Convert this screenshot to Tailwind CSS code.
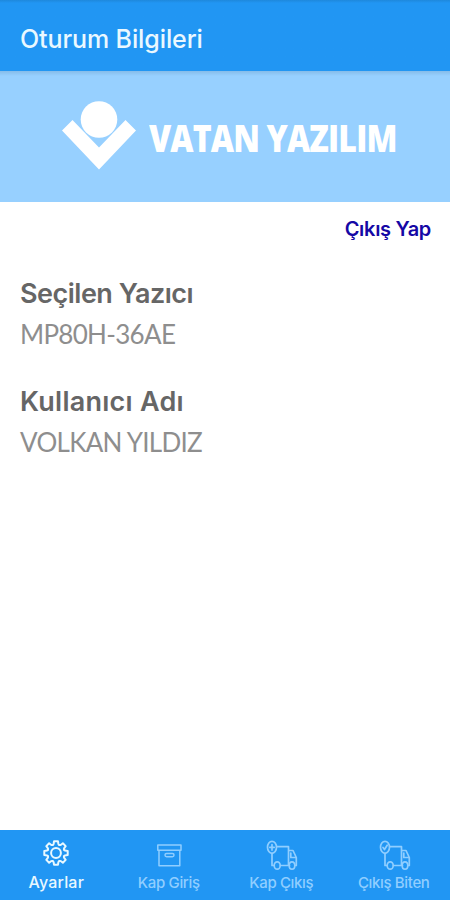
<!DOCTYPE html>
<html lang="tr">
<head>
<meta charset="utf-8">
<title>Oturum Bilgileri</title>
<script src="https://cdn.jsdelivr.net/npm/@tailwindcss/browser@4"></script>
</head>
<body class="w-[450px] h-[900px] overflow-hidden bg-white font-['Lato',sans-serif]">
<div class="flex flex-col w-[450px] h-[900px] whitespace-nowrap">
  <header class="h-[71px] shrink-0 bg-[#2196f3] bg-linear-to-b from-[#1e88dc] from-0% to-[#2196f3] to-[3px] pl-5 pt-[22px] text-[#eaf8ff]">
    <h1 class="font-['Inter',sans-serif] font-medium text-[25px] leading-[34px] tracking-[-0.1px]"><span>Oturum Bilgileri</span></h1>
  </header>
  <div class="h-[131px] shrink-0 bg-[#97d0ff] bg-linear-to-b from-[#86bce9] to-[#97d0ff] to-[5px] flex pl-[62px] pt-[30px]">
    <svg class="w-[74px] h-[70px] shrink-0" viewBox="0 0 74 70" fill="#fff"><circle cx="37" cy="18.500" r="18.300"/><path d="M0 29.500 10.500 19 37 46.500 63.500 19 74 29.500 37 68.500Z"/></svg>
    <div class="ml-[13px] mt-[17px] font-['Open_Sans',sans-serif] font-extrabold text-[37px] leading-[40px] tracking-[-1px] text-white origin-left scale-x-[0.866]"><span>VATAN YAZILIM</span></div>
  </div>
  <main class="flex-1 px-5">
    <div class="flex justify-end pt-[13px] -mr-[1px]"><a class="font-['Inter',sans-serif] font-semibold text-[20px] leading-[28px] tracking-[-0.3px] text-[#1508a5]">Çıkış Yap</a></div>
    <section class="mt-[33px]">
      <h2 class="font-['Inter',sans-serif] font-semibold text-[27px] leading-[36px] tracking-[-0.5px] text-[#666]"><span>Seçilen Yazıcı</span></h2>
      <p class="mt-[4px] text-[26px] leading-[36px] tracking-[-0.7px] text-[#8e8e8e]"><span>MP80H-36AE</span></p>
    </section>
    <section class="mt-[32px]">
      <h2 class="font-['Inter',sans-serif] font-semibold text-[27px] leading-[36px] tracking-[0.25px] text-[#666]"><span>Kullanıcı Adı</span></h2>
      <p class="mt-[4px] text-[26px] leading-[36px] tracking-[-0.7px] text-[#8e8e8e]"><span>VOLKAN YILDIZ</span></p>
    </section>
  </main>
  <nav class="h-[70px] shrink-0 bg-[#2196f3] grid grid-cols-4 text-[#90ceff] font-['Inter',sans-serif] font-medium text-[15px] tracking-[-0.35px] leading-[22px]">
    <div class="flex flex-col items-center pt-[8px] text-[#e8f8ff]">
      <svg class="w-[30px] h-[30px]" viewBox="-15 -15 30 30" fill="none" stroke="currentColor" stroke-width="2" stroke-linejoin="round" stroke-linecap="round">
        <defs><path id="tooth" d="M-3.330-8.040Q-2.600-8.400-2.400-9L-2-11.700H2L2.400-9Q2.600-8.400 3.330-8.040"/></defs>
        <use href="#tooth"/><use href="#tooth" transform="rotate(45)"/><use href="#tooth" transform="rotate(90)"/><use href="#tooth" transform="rotate(135)"/><use href="#tooth" transform="rotate(180)"/><use href="#tooth" transform="rotate(225)"/><use href="#tooth" transform="rotate(270)"/><use href="#tooth" transform="rotate(315)"/>
        <circle r="4.900"/>
      </svg>
      <span class="mt-[3px] text-[16px] tracking-[0.2px]">Ayarlar</span>
    </div>
    <div class="flex flex-col items-center pt-[8px]">
      <svg class="w-[30px] h-[30px]" viewBox="0 0 30 30" fill="none" stroke="currentColor" stroke-width="1.500" stroke-linejoin="round"><path d="M3.800 7H27V12.200H3.800ZM5 12.200V27.800H25.800V12.200"/><rect x="11" y="15.500" width="9" height="3.200" rx="1.600"/></svg>
      <span class="mt-[4px]">Kap Giriş</span>
    </div>
    <div class="flex flex-col items-center pt-[8px]">
      <svg class="w-[34px] h-[34px]" viewBox="-1 0 34 34" fill="none" stroke="currentColor" stroke-width="1.700" stroke-linejoin="round" stroke-linecap="round"><ellipse cx="7" cy="9.300" rx="4.500" ry="6"/><path d="M7 6.500V12.100M4.800 9.300H9.200M11.700 8.700H23.500V27M7 15.300V27.500H9M15.500 27.500H24.500M23.500 12.500H28L31.300 19.500V27.500H30M25.800 15V19.500H31"/><ellipse cx="12.200" cy="27.500" rx="3" ry="3.700"/><ellipse cx="27" cy="27.500" rx="2.800" ry="3.700"/></svg>
      <span>Kap Çıkış</span>
    </div>
    <div class="flex flex-col items-center pt-[8px]">
      <svg class="w-[34px] h-[34px]" viewBox="-1 0 34 34" fill="none" stroke="currentColor" stroke-width="1.700" stroke-linejoin="round" stroke-linecap="round"><ellipse cx="7" cy="9.300" rx="4.500" ry="6"/><path d="M5 9.500 6.500 11.500 9.200 7.200M11.700 8.700H23.500V27M7 15.300V27.500H9M15.500 27.500H24.500M23.500 12.500H28L31.300 19.500V27.500H30M25.800 15V19.500H31"/><ellipse cx="12.200" cy="27.500" rx="3" ry="3.700"/><ellipse cx="27" cy="27.500" rx="2.800" ry="3.700"/></svg>
      <span>Çıkış Biten</span>
    </div>
  </nav>
</div>
</body>
</html>
